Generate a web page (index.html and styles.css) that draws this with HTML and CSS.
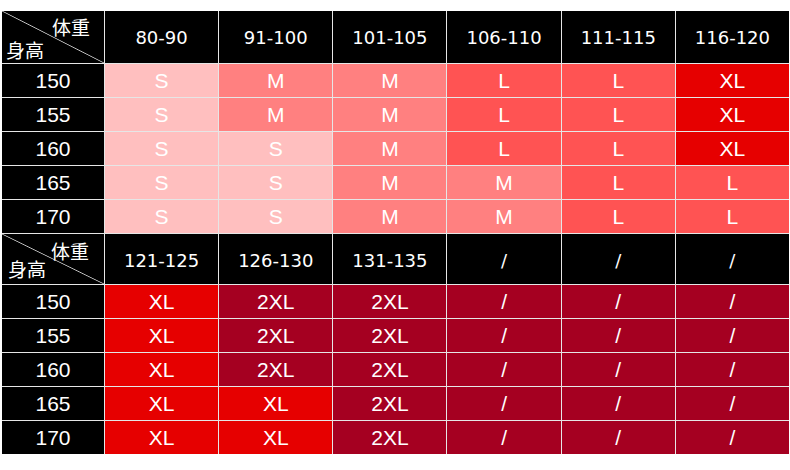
FILE: index.html
```html
<!DOCTYPE html>
<html lang="zh">
<head>
<meta charset="utf-8">
<title>尺码表</title>
<link rel="stylesheet" href="styles.css">
</head>
<body>
<div class="chart">
  <div class="corner corner-top"><span class="w">体重</span><span class="h">身高</span></div>
  <div class="hd">80-90</div><div class="hd">91-100</div><div class="hd">101-105</div><div class="hd">106-110</div><div class="hd">111-115</div><div class="hd">116-120</div>

  <div class="ht">150</div><div class="c s">S</div><div class="c m">M</div><div class="c m">M</div><div class="c l">L</div><div class="c l">L</div><div class="c xl">XL</div>
  <div class="ht">155</div><div class="c s">S</div><div class="c m">M</div><div class="c m">M</div><div class="c l">L</div><div class="c l">L</div><div class="c xl">XL</div>
  <div class="ht">160</div><div class="c s">S</div><div class="c s">S</div><div class="c m">M</div><div class="c l">L</div><div class="c l">L</div><div class="c xl">XL</div>
  <div class="ht">165</div><div class="c s">S</div><div class="c s">S</div><div class="c m">M</div><div class="c m">M</div><div class="c l">L</div><div class="c l">L</div>
  <div class="ht">170</div><div class="c s">S</div><div class="c s">S</div><div class="c m">M</div><div class="c m">M</div><div class="c l">L</div><div class="c l">L</div>

  <div class="corner corner-mid"><span class="w">体重</span><span class="h">身高</span></div>
  <div class="hd hd2">121-125</div><div class="hd hd2">126-130</div><div class="hd hd2">131-135</div><div class="hd hd2">/</div><div class="hd hd2">/</div><div class="hd hd2">/</div>

  <div class="ht">150</div><div class="c xl">XL</div><div class="c xxl">2XL</div><div class="c xxl">2XL</div><div class="c xxl">/</div><div class="c xxl">/</div><div class="c xxl">/</div>
  <div class="ht">155</div><div class="c xl">XL</div><div class="c xxl">2XL</div><div class="c xxl">2XL</div><div class="c xxl">/</div><div class="c xxl">/</div><div class="c xxl">/</div>
  <div class="ht">160</div><div class="c xl">XL</div><div class="c xxl">2XL</div><div class="c xxl">2XL</div><div class="c xxl">/</div><div class="c xxl">/</div><div class="c xxl">/</div>
  <div class="ht">165</div><div class="c xl">XL</div><div class="c xl">XL</div><div class="c xxl">2XL</div><div class="c xxl">/</div><div class="c xxl">/</div><div class="c xxl">/</div>
  <div class="ht">170</div><div class="c xl">XL</div><div class="c xl">XL</div><div class="c xxl">2XL</div><div class="c xxl">/</div><div class="c xxl">/</div><div class="c xxl">/</div>
</div>
</body>
</html>
```

FILE: styles.css
```css
html, body {
  margin: 0;
  background: #ffffff;
}
body {
  padding: 11px 1px 0 2px;
}
.chart {
  width: 787px;
  display: grid;
  grid-template-columns: 102px repeat(6, 1fr);
  grid-template-rows: 52px repeat(5, 33px) 50px repeat(5, 33px);
  gap: 1px;
  background: #e6e6e6;
  font-family: "Liberation Sans", Arial, sans-serif;
  color: #ffffff;
}
.chart > div {
  display: flex;
  align-items: center;
  justify-content: center;
}
.hd {
  background: #000000;
  font-family: "DejaVu Sans", "Noto Sans CJK SC", sans-serif;
  font-size: 18px;
  padding-top: 1px;
}
.hd2 {
  padding-top: 2px;
}
.ht {
  background: #000000;
  font-size: 21px;
}
.c {
  font-size: 21px;
}
.s { background: #ffbfbf; }
.m { background: #ff8080; }
.l { background: #ff5353; }
.xl { background: #e60000; }
.xxl { background: #a50021; }

.corner {
  position: relative;
  background-color: #000000;
  background-image: linear-gradient(to top right, transparent calc(50% - 0.8px), #c8c8c8 50%, transparent calc(50% + 0.8px));
  font-family: "Noto Sans CJK SC", "DejaVu Sans", sans-serif;
  font-size: 19px;
  line-height: 1;
}
.chart > .corner {
  display: block;
}
.corner .w {
  position: absolute;
  left: 50px;
  top: 6px;
}
.corner .h {
  position: absolute;
  left: 4px;
  top: 29px;
}
.corner-mid .w {
  top: 7px;
  left: 49px;
}
.corner-mid .h {
  top: 25px;
  left: 6px;
}
```
